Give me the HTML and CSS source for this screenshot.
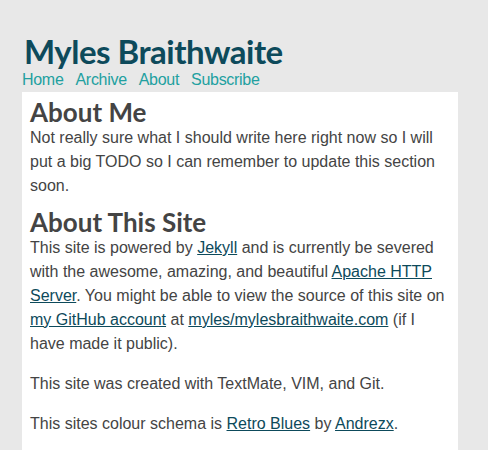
FILE: index.html
```html
<!DOCTYPE html>
<html>
<head>
<meta charset="utf-8">
<link rel="stylesheet" href="styles.css">
</head>
<body>
<div class="page">
  <header class="site-header">
    <h1 class="site-title">Myles Braithwaite</h1>
    <nav class="site-nav">
      <a href="#">Home</a>
      <a href="#">Archive</a>
      <a href="#">About</a>
      <a href="#">Subscribe</a>
    </nav>
  </header>
  <main class="content">
    <h2 class="section-title">About Me</h2>
    <p>Not really sure what I should write here right now so I will put a big TODO so I can remember to update this section soon.</p>
    <h2 class="section-title">About This Site</h2>
    <p>This site is powered by <a href="#">Jekyll</a> and is currently be severed with the awesome, amazing, and beautiful <a href="#">Apache HTTP Server</a>. You might be able to view the source of this site on <a href="#">my GitHub account</a> at <a href="#">myles/mylesbraithwaite.com</a> (if I have made it public).</p>
    <p>This site was created with TextMate, VIM, and Git.</p>
    <p>This sites colour schema is <a href="#">Retro Blues</a> by <a href="#">Andrezx</a>.</p>
  </main>
</div>
</body>
</html>
```
FILE: styles.css
```css
html, body {
  margin: 0;
  padding: 0;
  background: #e8e8e8;
}
body {
  font-family: "Liberation Sans", Arial, sans-serif;
  color: #444;
}
.page {
  width: 436px;
  margin: 0 0 0 22px;
  padding-top: 31px;
}
.site-title {
  margin: 0;
  font-family: "Lato", "DejaVu Sans", sans-serif;
  font-weight: 700;
  font-size: 33px;
  line-height: 40px;
  letter-spacing: -0.5px;
  color: #0d4a5b;
  padding-left: 2px;
}
.site-nav {
  display: flex;
  gap: 12px;
  font-size: 16px;
  line-height: 18px;
  padding-bottom: 3px;
}
.site-nav a {
  color: #22a0a0;
  text-decoration: none;
  letter-spacing: -0.3px;
}
.content {
  background: #fff;
  padding: 6px 8px 10px 8px;
}
.section-title {
  margin: 0;
  font-family: "Lato", "DejaVu Sans", sans-serif;
  font-weight: 700;
  font-size: 26px;
  line-height: 28px;
  color: #444;
}
.content p {
  margin: 0 0 16px 0;
  font-size: 16px;
  line-height: 24px;
}
.content p + .section-title {
  margin-top: -6px;
}
.content a {
  color: #0d4a5b;
}
```
